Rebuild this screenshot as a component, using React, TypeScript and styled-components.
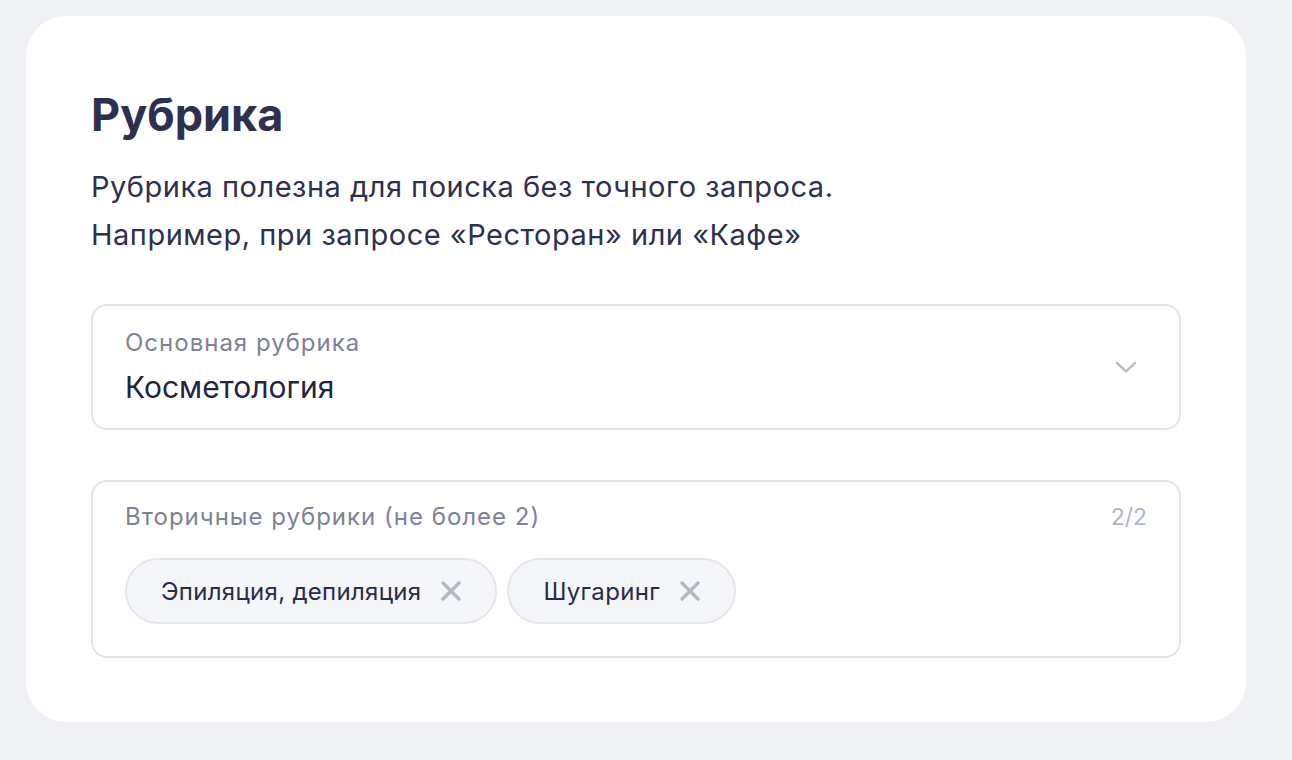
import styled, { createGlobalStyle } from "styled-components";

const GlobalStyle = createGlobalStyle`
  body {
    margin: 0;
    background: #f0f1f5;
    font-family: Inter, "Noto Sans", sans-serif;
  }
`;

const secondary = ["Эпиляция, депиляция", "Шугаринг"];

const ChevronIcon = () => (
  <svg width="22" height="13" viewBox="0 0 22 13" fill="none">
    <path d="M2 2L11 10.5L20 2" stroke="#b3b8c6" strokeWidth="2.4" strokeLinecap="round" strokeLinejoin="round" />
  </svg>
);

const CloseIcon = () => (
  <svg width="20" height="20" viewBox="0 0 20 20" fill="none">
    <path d="M2 2L18 18M18 2L2 18" stroke="#b4b9c6" strokeWidth="3.4" strokeLinecap="round" />
  </svg>
);

const App = () => {
  return (
    <>
      <GlobalStyle />
      <Page>
        <Card>
          <Title>Рубрика</Title>
          <Description>
            Рубрика полезна для поиска без точного запроса.
            <br />
            Например, при запросе «Ресторан» или «Кафе»
          </Description>

          <SelectField>
            <FieldText>
              <Label>Основная рубрика</Label>
              <Value>Косметология</Value>
            </FieldText>
            <ChevronIcon />
          </SelectField>

          <TagsField>
            <TagsHeader>
              <Label>Вторичные рубрики (не более 2)</Label>
              <Counter>2/2</Counter>
            </TagsHeader>
            <Tags>
              {secondary.map((name) => (
                <Tag key={name}>
                  <span>{name}</span>
                  <CloseIcon />
                </Tag>
              ))}
            </Tags>
          </TagsField>
        </Card>
      </Page>
    </>
  );
};

const Page = styled.div`
  padding: 16px 46px 38px 26px;
`;

const Card = styled.div`
  width: 1220px;
  box-sizing: border-box;
  padding: 73px 65px 64px;
  background: #fff;
  border-radius: 40px;
  color: #2f3050;
`;

const Title = styled.h1`
  margin: 0;
  font-size: 45px;
  line-height: 52px;
  font-weight: 700;
  color: #2f3050;
`;

const Description = styled.p`
  margin: 22px 0 0;
  font-size: 29px;
  line-height: 48px;
  letter-spacing: 0.5px;
  font-weight: 400;
  color: #2f3050;
`;

const FieldBox = styled.div`
  box-sizing: border-box;
  border: 2px solid #e3e4eb;
  border-radius: 16px;
  background: #fff;
`;

const SelectField = styled(FieldBox)`
  margin-top: 45px;
  height: 126px;
  padding: 0 42px 0 32px;
  display: flex;
  align-items: center;
  justify-content: space-between;
`;

const FieldText = styled.div`
  display: flex;
  flex-direction: column;
  gap: 12px;
`;

const Label = styled.div`
  font-size: 24px;
  line-height: 28px;
  letter-spacing: 1px;
  color: #7d8296;
`;

const Value = styled.div`
  font-size: 30px;
  line-height: 36px;
  color: #24243e;
`;

const TagsField = styled(FieldBox)`
  margin-top: 50px;
  padding: 21px 32px 32px;
`;

const TagsHeader = styled.div`
  display: flex;
  justify-content: space-between;
  align-items: center;
`;

const Counter = styled.span`
  font-size: 23px;
  line-height: 28px;
  color: #b0b5c3;
`;

const Tags = styled.div`
  display: flex;
  gap: 10px;
  margin-top: 27px;
`;

const Tag = styled.div`
  box-sizing: border-box;
  height: 66px;
  display: flex;
  align-items: center;
  gap: 20px;
  padding: 0 34px;
  border: 2px solid #e4e5ee;
  border-radius: 33px;
  background: #f5f6fa;
  font-size: 24px;
  letter-spacing: 0.3px;
  color: #2a2b47;
`;

export default App;
